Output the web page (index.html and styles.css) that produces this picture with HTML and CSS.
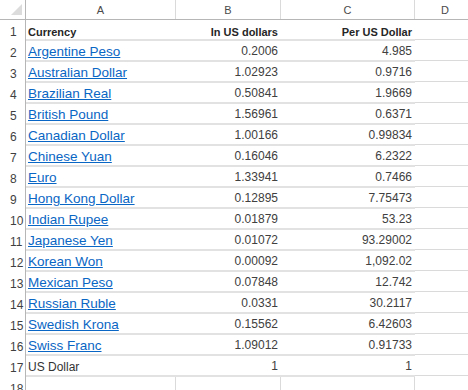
FILE: index.html
```html
<!DOCTYPE html>
<html>
<head>
<meta charset="utf-8">
<link rel="stylesheet" href="styles.css">
</head>
<body>
<div class="sheet">
  <div class="row hdr">
    <div class="corner"><svg width="25" height="19" viewBox="0 0 25 19"><polygon points="11,15 22,4 22,15" fill="#dcdcdc"/></svg></div>
    <div class="col">A</div>
    <div class="col">B</div>
    <div class="col">C</div>
    <div class="col last">D</div>
  </div>
  <div class="row">
    <div class="rh">1</div>
    <div class="c th left">Currency</div>
    <div class="c th">In US dollars</div>
    <div class="c th">Per US Dollar</div>
    <div class="d"></div>
  </div>
  <div class="row"><div class="rh">2</div><div class="c txt"><a>Argentine Peso</a></div><div class="c num">0.2006</div><div class="c num">4.985</div><div class="d"></div></div>
  <div class="row"><div class="rh">3</div><div class="c txt"><a>Australian Dollar</a></div><div class="c num">1.02923</div><div class="c num">0.9716</div><div class="d"></div></div>
  <div class="row"><div class="rh">4</div><div class="c txt"><a>Brazilian Real</a></div><div class="c num">0.50841</div><div class="c num">1.9669</div><div class="d"></div></div>
  <div class="row"><div class="rh">5</div><div class="c txt"><a>British Pound</a></div><div class="c num">1.56961</div><div class="c num">0.6371</div><div class="d"></div></div>
  <div class="row"><div class="rh">6</div><div class="c txt"><a>Canadian Dollar</a></div><div class="c num">1.00166</div><div class="c num">0.99834</div><div class="d"></div></div>
  <div class="row"><div class="rh">7</div><div class="c txt"><a>Chinese Yuan</a></div><div class="c num">0.16046</div><div class="c num">6.2322</div><div class="d"></div></div>
  <div class="row"><div class="rh">8</div><div class="c txt"><a>Euro</a></div><div class="c num">1.33941</div><div class="c num">0.7466</div><div class="d"></div></div>
  <div class="row"><div class="rh">9</div><div class="c txt"><a>Hong Kong Dollar</a></div><div class="c num">0.12895</div><div class="c num">7.75473</div><div class="d"></div></div>
  <div class="row"><div class="rh">10</div><div class="c txt"><a>Indian Rupee</a></div><div class="c num">0.01879</div><div class="c num">53.23</div><div class="d"></div></div>
  <div class="row"><div class="rh">11</div><div class="c txt"><a>Japanese Yen</a></div><div class="c num">0.01072</div><div class="c num">93.29002</div><div class="d"></div></div>
  <div class="row"><div class="rh">12</div><div class="c txt"><a>Korean Won</a></div><div class="c num">0.00092</div><div class="c num">1,092.02</div><div class="d"></div></div>
  <div class="row"><div class="rh">13</div><div class="c txt"><a>Mexican Peso</a></div><div class="c num">0.07848</div><div class="c num">12.742</div><div class="d"></div></div>
  <div class="row"><div class="rh">14</div><div class="c txt"><a>Russian Ruble</a></div><div class="c num">0.0331</div><div class="c num">30.2117</div><div class="d"></div></div>
  <div class="row"><div class="rh">15</div><div class="c txt"><a>Swedish Krona</a></div><div class="c num">0.15562</div><div class="c num">6.42603</div><div class="d"></div></div>
  <div class="row"><div class="rh">16</div><div class="c txt"><a>Swiss Franc</a></div><div class="c num">1.09012</div><div class="c num">0.91733</div><div class="d"></div></div>
  <div class="row"><div class="rh">17</div><div class="c plain">US Dollar</div><div class="c num">1</div><div class="c num">1</div><div class="d"></div></div>
  <div class="row"><div class="rh">18</div><div class="e"></div><div class="e"></div><div class="e"></div><div class="e last"></div></div>
</div>
</body>
</html>
```

FILE: styles.css
```css
html, body {
  margin: 0;
  padding: 0;
  background: #ffffff;
  overflow: hidden;
}
.sheet {
  width: 468px;
  height: 390px;
  overflow: hidden;
  font-family: "Liberation Sans", Arial, sans-serif;
}
.row {
  display: grid;
  grid-template-columns: 26px 150px 105px 134px 60px;
  height: 21px;
  align-items: start;
}
.row.hdr {
  height: 20px;
  border-bottom: 1px solid #b6b6b6;
  box-sizing: border-box;
}
.corner {
  height: 19px;
  border-right: 1px solid #b6b6b6;
}
.corner svg { display: block; }
.col {
  height: 19px;
  box-sizing: border-box;
  border-right: 1px solid #dadada;
  text-align: center;
  font-size: 11px;
  line-height: 18px;
  padding-top: 1px;
  color: #4a4a4a;
}
.col.last { border-right: none; }
.rh {
  height: 21px;
  box-sizing: border-box;
  border-right: 1px solid #b6b6b6;
  padding: 3px 0 0 10px;
  font-size: 12px;
  line-height: 18px;
  color: #3f3f3f;
}
.c {
  height: 21px;
  box-sizing: border-box;
  border-bottom: 2px solid #e2e2e2;
  white-space: nowrap;
  overflow: visible;
}
.th {
  font-weight: bold;
  font-size: 11px;
  line-height: 18px;
  padding: 3px 3px 0 2px;
  text-align: right;
  color: #262626;
}
.th.left { text-align: left; }
.txt {
  font-size: 13.5px;
  line-height: 18px;
  padding: 2px 0 0 2px;
}
.txt a {
  color: #0a66c4;
  text-decoration: underline;
}
.plain {
  font-size: 12px;
  line-height: 18px;
  padding: 2px 0 0 2px;
  color: #333333;
}
.num {
  font-size: 12px;
  line-height: 18px;
  padding: 1px 3px 0 0;
  text-align: right;
  color: #404040;
}
.d {
  height: 20px;
  box-sizing: border-box;
  border-bottom: 1px solid #dadada;
}
.e {
  height: 21px;
  box-sizing: border-box;
  border-right: 1px solid #dadada;
}
.e.last { border-right: none; }
```
